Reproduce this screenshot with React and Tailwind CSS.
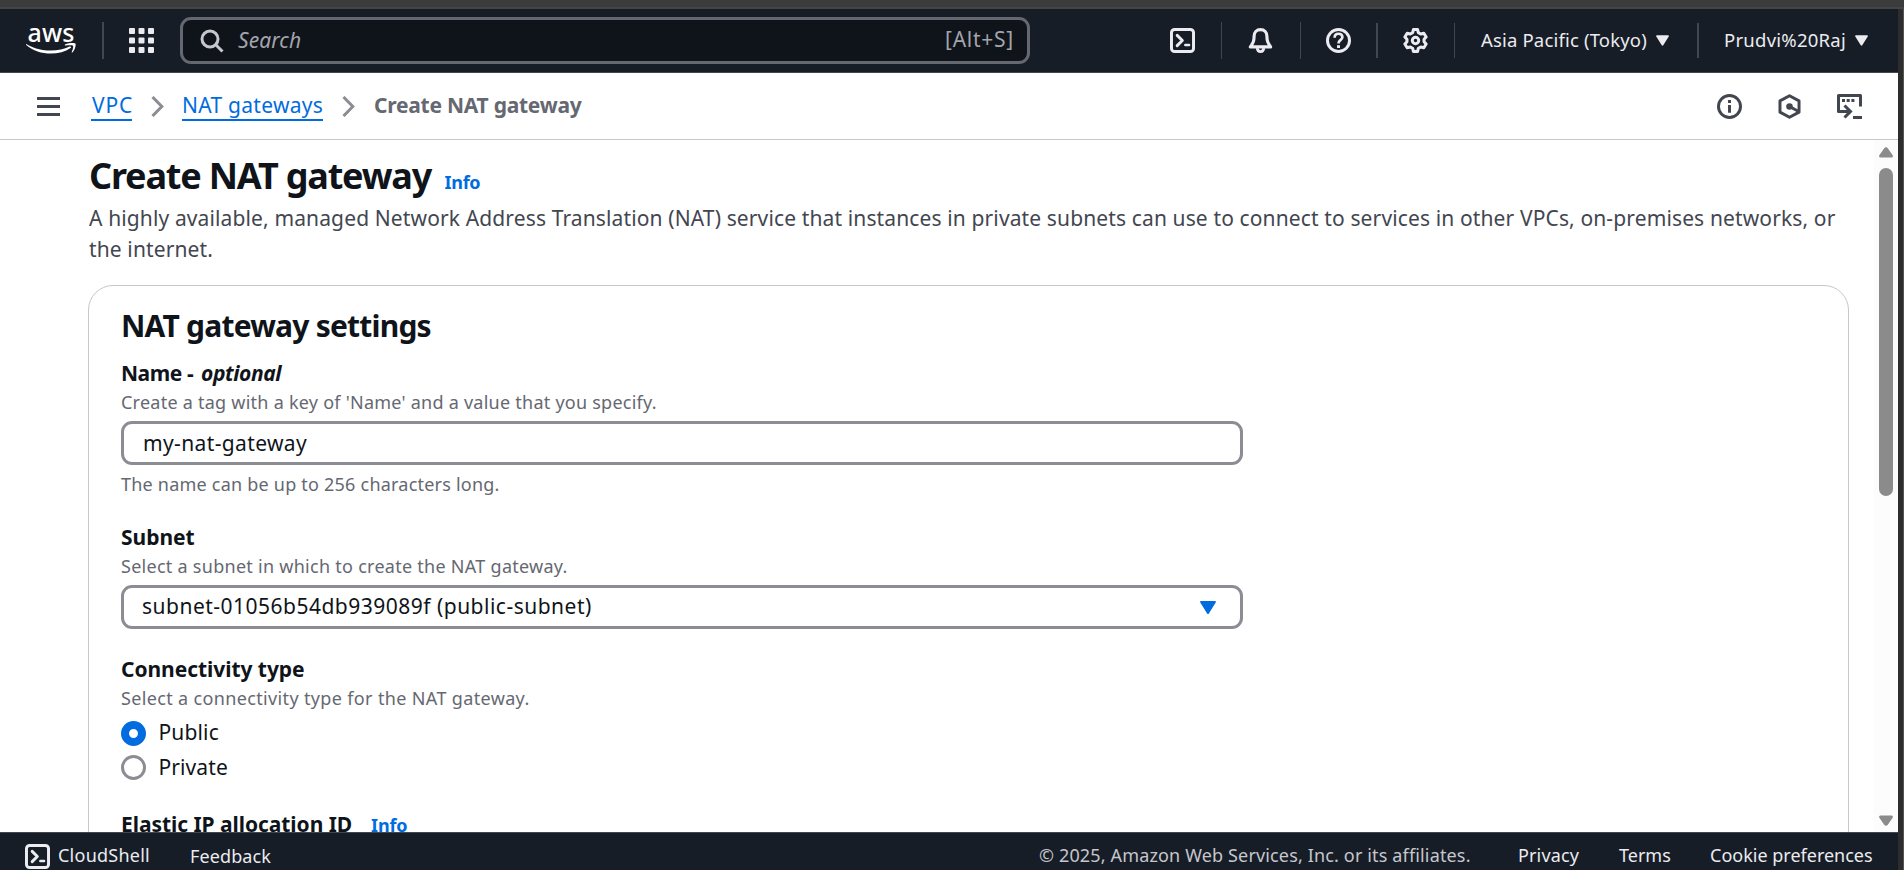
const svgBase = { fill: 'none', stroke: 'currentColor', strokeLinejoin: 'round' };

function AwsLogo() {
  return (
    <div className="flex h-[32px] w-[50px] flex-col items-center">
      <span className="h-[18px] text-[25px] leading-[14px] font-medium tracking-[0.2px] text-white">aws</span>
      <svg viewBox="0 0 50 13" className="h-[13px] w-[50px] shrink-0 fill-white">
        <path d="M0.6 1.2C14 9.3 32 9.2 43.6 3.6C44.8 3.1 45.6 4.2 44.6 5C33 13.2 12 12.6 0.2 2C-0.2 1.5 0.1 0.9 0.6 1.2Z" />
        <path d="M39 1.6C42 -0.4 48.5 -0.4 49.4 0.6C50.2 1.8 49 7.4 46.4 9.4C45.9 9.8 45.5 9.5 45.7 9C46.6 6.8 47.6 3.8 47 2.8C46.2 2 42.6 2.2 39.6 2.6C38.9 2.7 38.5 2 39 1.6Z" />
      </svg>
    </div>
  );
}

function GridIcon() {
  return (
    <svg viewBox="0 0 25 25" className="h-[25px] w-[25px] fill-[#ebebf0]">
      {[0, 9.5, 19].map((y) =>
        [0, 9.5, 19].map((x) => <rect key={`${x}-${y}`} x={x} y={y} width="6" height="6" rx="1" />)
      )}
    </svg>
  );
}

function SearchIcon() {
  return (
    <svg viewBox="0 0 24 24" className="h-6 w-6" {...svgBase} strokeWidth="3">
      <circle cx="10" cy="10" r="8" />
      <path d="M15.5 15.5L22.5 22.5" />
    </svg>
  );
}

function TerminalIcon() {
  return (
    <svg viewBox="0 0 16 16" className="h-[25px] w-[25px]" {...svgBase} strokeWidth="1.9">
      <rect x="0.95" y="0.95" width="14.1" height="14.1" rx="2" />
      <path d="M4.6 4.7L7.9 8L4.6 11.3" strokeLinecap="round" />
      <path d="M9.8 10.9H12.2" strokeLinecap="round" strokeWidth="1.6" />
    </svg>
  );
}

function BellIcon() {
  return (
    <svg viewBox="0 0 16 16" className="h-[25px] w-[25px]" {...svgBase} strokeWidth="2">
      <path d="M8 1C5.4 1 3.9 2.9 3.9 5.2C3.9 8.6 3.2 9.6 1.5 12.1H14.5C12.8 9.6 12.1 8.6 12.1 5.2C12.1 2.9 10.6 1 8 1Z" />
      <path d="M5.9 12.9C6.1 15.8 9.9 15.8 10.1 12.9" strokeWidth="1.8" />
    </svg>
  );
}

function HelpIcon() {
  return (
    <svg viewBox="0 0 16 16" className="h-[25px] w-[25px]" {...svgBase} strokeWidth="1.9">
      <circle cx="8" cy="8" r="7.05" />
      <path d="M5.5 6.2C5.5 4.6 6.6 3.7 8 3.7C9.5 3.7 10.5 4.6 10.5 5.9C10.5 7.6 8 7.7 8 9.9" strokeWidth="1.7" />
      <path d="M8 11V12.8" strokeWidth="1.9" />
    </svg>
  );
}

function GearIcon() {
  return (
    <svg viewBox="0 0 24 24" className="h-[25px] w-[25px]" {...svgBase} strokeWidth="2.9">
      <path d="M10 1.5H14L14.7 4.5L17 5.8L20 5L22.2 8.6L20.2 10.8V13.2L22.2 15.4L20 19L17 18.2L14.7 19.5L14 22.5H10L9.3 19.5L7 18.2L4 19L1.8 15.4L3.8 13.2V10.8L1.8 8.6L4 5L7 5.8L9.3 4.5Z" />
      <circle cx="12" cy="12" r="3.1" />
    </svg>
  );
}

function InfoIcon() {
  return (
    <svg viewBox="0 0 16 16" className="h-[25px] w-[25px]" {...svgBase} strokeWidth="1.9">
      <circle cx="8" cy="8" r="7.05" />
      <path d="M8 3.9V5.7M8 7V12" />
    </svg>
  );
}

function HexIcon() {
  return (
    <svg viewBox="0 0 16 16" className="h-[25px] w-[25px]" {...svgBase} strokeWidth="1.9">
      <path d="M8 1.1L14.1 4.4V11.6L8 14.9L1.9 11.6V4.4Z" />
      <circle cx="8" cy="8" r="2.1" className="fill-current" stroke="none" />
      <path d="M8 8L13.6 11" />
    </svg>
  );
}

function ConsoleIcon() {
  return (
    <svg viewBox="0 0 25 25" className="h-[25px] w-[25px]" {...svgBase} strokeWidth="3">
      <path d="M23.5 12.5V1.5H1.5V17.5H13" />
      <path d="M7.5 11.5L13.5 17.5L7.5 23.5" strokeLinejoin="miter" />
      <path d="M16 23.5H25" />
      <path d="M5 6.5H8M9.7 6.5H12.7M14.4 6.5H17.4" />
    </svg>
  );
}

function Triangle({ className }) {
  return (
    <svg viewBox="0 0 16 13" className={className} fill="currentColor">
      <path d="M1.2 0H14.8C15.8 0 16.2 0.8 15.7 1.6L8.9 12.4C8.5 13.1 7.5 13.1 7.1 12.4L0.3 1.6C-0.2 0.8 0.2 0 1.2 0Z" />
    </svg>
  );
}

function ScrollArrow({ className }) {
  return (
    <svg viewBox="0 0 14 12" className={`h-[12px] w-[14px] ${className}`} fill="currentColor">
      <path d="M1.8 0.5H12.2C13.8 0.5 14.4 1.8 13.5 3L8.8 9.8C7.8 11.2 6.2 11.2 5.2 9.8L0.5 3C-0.4 1.8 0.2 0.5 1.8 0.5Z" />
    </svg>
  );
}

function Chevron() {
  return (
    <svg viewBox="0 0 13 21" className="h-[21px] w-[13px] text-[#8c8c94]" {...svgBase} strokeLinejoin="miter" strokeWidth="3">
      <path d="M1.5 1L10.8 10.5L1.5 20" />
    </svg>
  );
}

function Divider({ className = '' }) {
  return <span className={`shrink-0 bg-[#424650] ${className}`} />;
}

function Header() {
  return (
    <header className="flex h-[64px] shrink-0 items-center border-b border-[#424650] bg-[#161d26] text-[#ebebf0]">
      <div className="ml-[26px]"><AwsLogo /></div>
      <Divider className="ml-[26px] h-[37px] w-[2px]" />
      <div className="ml-[25px]"><GridIcon /></div>
      <div className="ml-[26px] flex h-[47px] w-[850px] items-center rounded-[11px] border-[3px] border-[#656871] bg-[#0f141a] pr-[13px] pl-[17px] text-[21px]">
        <span className="text-[#c6c6cd]"><SearchIcon /></span>
        <span className="ml-[14px] grow tracking-[0.1px] text-[#a4a4ad] italic">Search</span>
        <span className="pb-[2px] tracking-[0.75px] text-[#a4a4ad]">[Alt+S]</span>
      </div>
      <div className="ml-[140px]"><TerminalIcon /></div>
      <Divider className="ml-[26px] h-[37px] w-px" />
      <div className="ml-[26px]"><BellIcon /></div>
      <Divider className="ml-[27px] h-[37px] w-px" />
      <div className="ml-[25px]"><HelpIcon /></div>
      <Divider className="ml-[25px] h-[35px] w-[2px]" />
      <div className="ml-[25px]"><GearIcon /></div>
      <Divider className="ml-[26px] h-[35px] w-px" />
      <span className="ml-[26px] w-[167px] pb-[2px] text-[18.5px] tracking-[0.17px] whitespace-nowrap">Asia Pacific (Tokyo)</span>
      <Triangle className="ml-[8px] h-[11px] w-[13px]" />
      <Divider className="ml-[28px] h-[35px] w-[2px]" />
      <span className="ml-[25px] w-[122px] pb-[2px] text-[18.5px] tracking-[0.25px] whitespace-nowrap">Prudvi%20Raj</span>
      <Triangle className="ml-[9px] h-[11px] w-[13px]" />
    </header>
  );
}

function Breadcrumbs() {
  return (
    <nav className="flex h-[67px] shrink-0 items-center border-b border-[#c6c6cd] pr-[36px] pl-[37px] text-[21px] text-[#424650]">
      <span className="flex h-[19px] w-[23px] flex-col justify-between">
        <span className="h-[3px] bg-current" />
        <span className="h-[3px] bg-current" />
        <span className="h-[3px] bg-current" />
      </span>
      <a className="ml-[31px] h-[30px] w-[41px] border-b-2 border-[#006ce0] pl-px leading-[28px] tracking-[0.8px] whitespace-nowrap text-[#006ce0]">VPC</a>
      <span className="ml-[19px]"><Chevron /></span>
      <a className="ml-[18px] h-[30px] w-[141px] border-b-2 border-[#006ce0] leading-[28px] tracking-[0.27px] whitespace-nowrap text-[#006ce0]">NAT gateways</a>
      <span className="ml-[19px]"><Chevron /></span>
      <span className="ml-[19px] h-[30px] grow leading-[28px] font-bold tracking-[-0.25px] text-[#656871]">Create NAT gateway</span>
      <div className="flex gap-[35px]">
        <InfoIcon />
        <HexIcon />
        <ConsoleIcon />
      </div>
    </nav>
  );
}

function Label({ className = '', children }) {
  return <div className={`h-[28px] text-[21px] leading-[28px] font-bold whitespace-pre ${className}`}>{children}</div>;
}

function Hint({ className = '', children }) {
  return <p className={`h-[24px] text-[18px] leading-[24px] whitespace-nowrap text-[#656871] ${className}`}>{children}</p>;
}

function Settings() {
  return (
    <section className="mt-[20px] h-[700px] w-[1761px] rounded-[25px] border border-[#c6c6cd] bg-white pt-[21px] pl-[32px]">
      <h2 className="h-[38px] text-[30px] leading-[38px] font-bold tracking-[-0.78px]">NAT gateway settings</h2>

      <Label className="mt-[14px] flex">
        <span className="w-[66px] tracking-[-0.5px]">Name</span>
        <span className="w-[14px]">-</span>
        <i className="tracking-[-0.4px]">optional</i>
      </Label>
      <Hint className="mt-[3px] tracking-[0.245px]">Create a tag with a key of 'Name' and a value that you specify.</Hint>
      <div className="mt-[7px] flex h-[44px] w-[1122px] items-center rounded-[11px] border-[3px] border-[#8c8c94] bg-white pl-[19px]">
        <span className="text-[21px] leading-[28px] tracking-[0.37px]">my-nat-gateway</span>
      </div>
      <Hint className="mt-[7px] tracking-[0.22px]">The name can be up to 256 characters long.</Hint>

      <Label className="mt-[27px] tracking-[-0.03px]">Subnet</Label>
      <Hint className="mt-[3px] tracking-[0.27px]">Select a subnet in which to create the NAT gateway.</Hint>
      <div className="mt-[7px] flex h-[44px] w-[1122px] items-center justify-between rounded-[11px] border-[3px] border-[#8c8c94] bg-white pr-[24px] pl-[18px]">
        <span className="pb-[2px] text-[21px] leading-[28px] tracking-[0.49px]">subnet-01056b54db939089f (public-subnet)</span>
        <Triangle className="h-[13px] w-[16px] text-[#006ce0]" />
      </div>

      <Label className="mt-[26px] tracking-[-0.05px]">Connectivity type</Label>
      <Hint className="mt-[3px] tracking-[0.35px]">Select a connectivity type for the NAT gateway.</Hint>
      <div className="mt-[6px] text-[21px] leading-[28px]">
        <div className="flex h-[34px] items-center gap-[12.5px]">
          <span className="h-[25px] w-[25px] rounded-full border-[8px] border-[#006ce0] bg-white" />
          <span className="pb-[2px] tracking-[0.15px]">Public</span>
        </div>
        <div className="flex h-[34px] items-center gap-[12.5px]">
          <span className="h-[25px] w-[25px] rounded-full border-[3px] border-[#8c8c94] bg-white" />
          <span className="pb-[1px] tracking-[0.1px]">Private</span>
        </div>
      </div>

      <div className="mt-[26px] flex items-baseline">
        <Label className="tracking-[-0.05px]">Elastic IP allocation ID</Label>
        <a className="ml-[19px] text-[18px] font-bold tracking-[-0.2px] text-[#006ce0]">Info</a>
      </div>
    </section>
  );
}

function Scrollbar() {
  return (
    <div className="flex w-[24px] flex-col items-center bg-[#fcfcfc] pt-[6px] text-[#8b8b8b]">
      <ScrollArrow className="rotate-180" />
      <div className="mt-[10px] h-[328px] w-[14px] rounded-full bg-[#8b8b8b]" />
      <ScrollArrow className="mt-[319px]" />
    </div>
  );
}

function Footer() {
  return (
    <footer className="flex h-[38px] shrink-0 items-start overflow-hidden border-t border-[#424650] bg-[#161d26] pt-[10px] text-[18px] leading-[24px] whitespace-nowrap text-[#ebebf0]">
      <span className="mt-px ml-[25px]"><TerminalIcon /></span>
      <span className="ml-[8px] w-[93px] tracking-[0.24px]">CloudShell</span>
      <span className="mt-px ml-[39px] grow tracking-[0.11px]">Feedback</span>
      <span className="w-[432px] tracking-[0.15px] text-[#c6c6cd]">© 2025, Amazon Web Services, Inc. or its affiliates.</span>
      <span className="ml-[47px] w-[61px] tracking-[0.14px]">Privacy</span>
      <span className="ml-[40px] w-[52px]">Terms</span>
      <span className="mr-[25px] ml-[39px] w-[163px]">Cookie preferences</span>
    </footer>
  );
}

export default function App() {
  return (
    <div className="flex h-[870px] w-[1904px] flex-col overflow-hidden bg-[#2d2d2d] font-['Noto_Sans',sans-serif] text-[#0f141a]">
      <div className="h-[9px] shrink-0 border-b-2 border-[#454545] bg-[#3c3c3c]" />
      <div className="flex min-h-0 grow">
        <div className="flex w-[1898px] flex-col bg-white">
          <Header />
          <Breadcrumbs />
          <div className="flex min-h-0 grow overflow-hidden">
            <main className="w-[1874px] pt-[13px] pl-[88px]">
              <div className="flex h-[46px] items-baseline pl-px leading-[46px] font-bold">
                <h1 className="text-[36px] tracking-[-1.19px]">Create NAT gateway</h1>
                <a className="ml-[13.5px] text-[18px] tracking-[-0.3px] text-[#006ce0]">Info</a>
              </div>
              <p className="mt-[4px] w-[1762px] pl-px text-[21px] leading-[31px] tracking-[0.128px] text-[#424650]">
                A highly available, managed Network Address Translation (NAT) service that instances in private subnets can use to connect to services in other VPCs, on-premises networks, or the internet.
              </p>
              <Settings />
            </main>
            <Scrollbar />
          </div>
          <Footer />
        </div>
        <div className="w-[6px] border-r border-[#555555] bg-[#2d2d2d]" />
      </div>
    </div>
  );
}
